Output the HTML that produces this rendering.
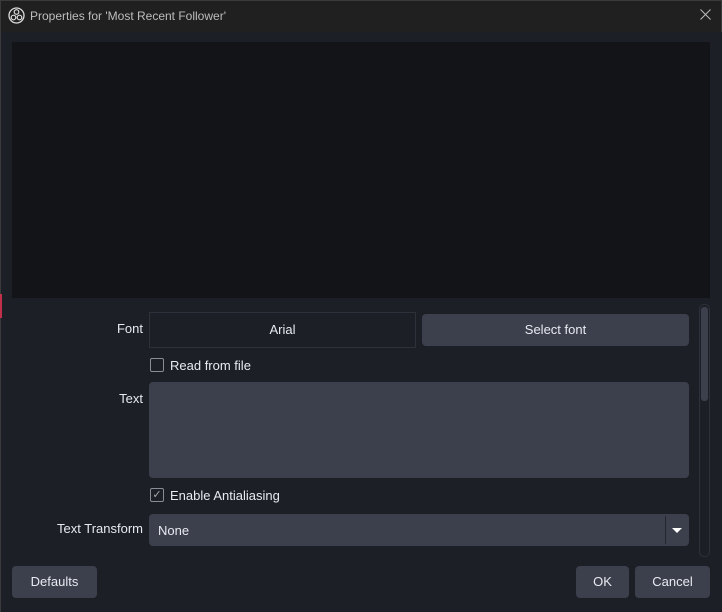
<!DOCTYPE html>
<html><head><style>
*{margin:0;padding:0;box-sizing:border-box}
body{width:722px;height:612px;background:#1d1f26;font-family:"Liberation Sans","DejaVu Sans",sans-serif;font-size:13px;color:#e8eaf0;position:relative;overflow:hidden}
.a{position:absolute}
.title{left:0;top:0;width:722px;height:32px;background:#202020;border:1px solid #3a3a3a;border-bottom:none}
.lbl{text-align:right;font-size:13px}
.btn{background:#3c404d;border-radius:4px;text-align:center;font-size:13px}
.cb{width:14px;height:14px;border:1px solid #8a8d96;border-radius:2px}
</style></head><body>
<div class="a title"></div>
<svg class="a" style="left:8px;top:7px" width="17" height="17" viewBox="0 0 17 17"><circle cx="8.5" cy="8.5" r="7.5" fill="none" stroke="#ddd" stroke-width="1.3"/><circle cx="8.5" cy="5" r="2.3" fill="none" stroke="#ddd" stroke-width="1.2"/><circle cx="5.5" cy="10.5" r="2.3" fill="none" stroke="#ddd" stroke-width="1.2"/><circle cx="11.5" cy="10.5" r="2.3" fill="none" stroke="#ddd" stroke-width="1.2"/></svg>
<div class="a" style="left:30px;top:9px;font-size:12px;color:#bdbdbd">Properties for 'Most Recent Follower'</div>
<svg class="a" style="left:700px;top:9px" width="11" height="11" viewBox="0 0 11 11"><path d="M0.5 0.5L10.5 10.5M10.5 0.5L0.5 10.5" stroke="#bbb" stroke-width="1"/></svg>
<div class="a" style="left:0;top:32px;width:1px;height:580px;background:#3a3a3a"></div>
<div class="a" style="left:0;top:294px;width:2px;height:24px;background:#c0304a"></div>
<div class="a" style="left:12px;top:42px;width:698px;height:256px;background:#131418"></div>
<div class="a lbl" style="left:60px;top:321px;width:83px">Font</div>
<div class="a" style="left:149px;top:312px;width:267px;height:36px;border:1px solid #2e313b;text-align:center;line-height:34px">Arial</div>
<div class="a btn" style="left:422px;top:314px;width:267px;height:32px;line-height:32px">Select font</div>
<div class="a cb" style="left:150px;top:358px"></div>
<div class="a" style="left:170px;top:358px">Read from file</div>
<div class="a lbl" style="left:60px;top:391px;width:83px">Text</div>
<div class="a" style="left:149px;top:382px;width:540px;height:96px;background:#3c404d;border-radius:4px"></div>
<div class="a cb" style="left:150px;top:488px;text-align:center;line-height:12px;font-size:11px;color:#aaa">✓</div>
<div class="a" style="left:170px;top:488px">Enable Antialiasing</div>
<div class="a lbl" style="left:30px;top:521px;width:113px">Text Transform</div>
<div class="a" style="left:149px;top:514px;width:540px;height:32px;background:#3c404d;border-radius:4px"></div>
<div class="a" style="left:158px;top:523px">None</div>
<div class="a" style="left:665px;top:516px;width:1px;height:28px;background:#25272e"></div>
<div class="a" style="left:672px;top:528px;width:0;height:0;border-left:5px solid transparent;border-right:5px solid transparent;border-top:5px solid #fff"></div>
<div class="a" style="left:699px;top:304px;width:11px;height:253px;border:1px solid #2e313b;border-radius:5px;background:#1d1f26"></div>
<div class="a" style="left:701px;top:307px;width:7px;height:94px;background:#3c404d;border-radius:3px"></div>
<div class="a btn" style="left:12px;top:566px;width:85px;height:32px;line-height:32px">Defaults</div>
<div class="a btn" style="left:576px;top:566px;width:53px;height:32px;line-height:32px">OK</div>
<div class="a btn" style="left:635px;top:566px;width:75px;height:32px;line-height:32px">Cancel</div>
</body></html>
